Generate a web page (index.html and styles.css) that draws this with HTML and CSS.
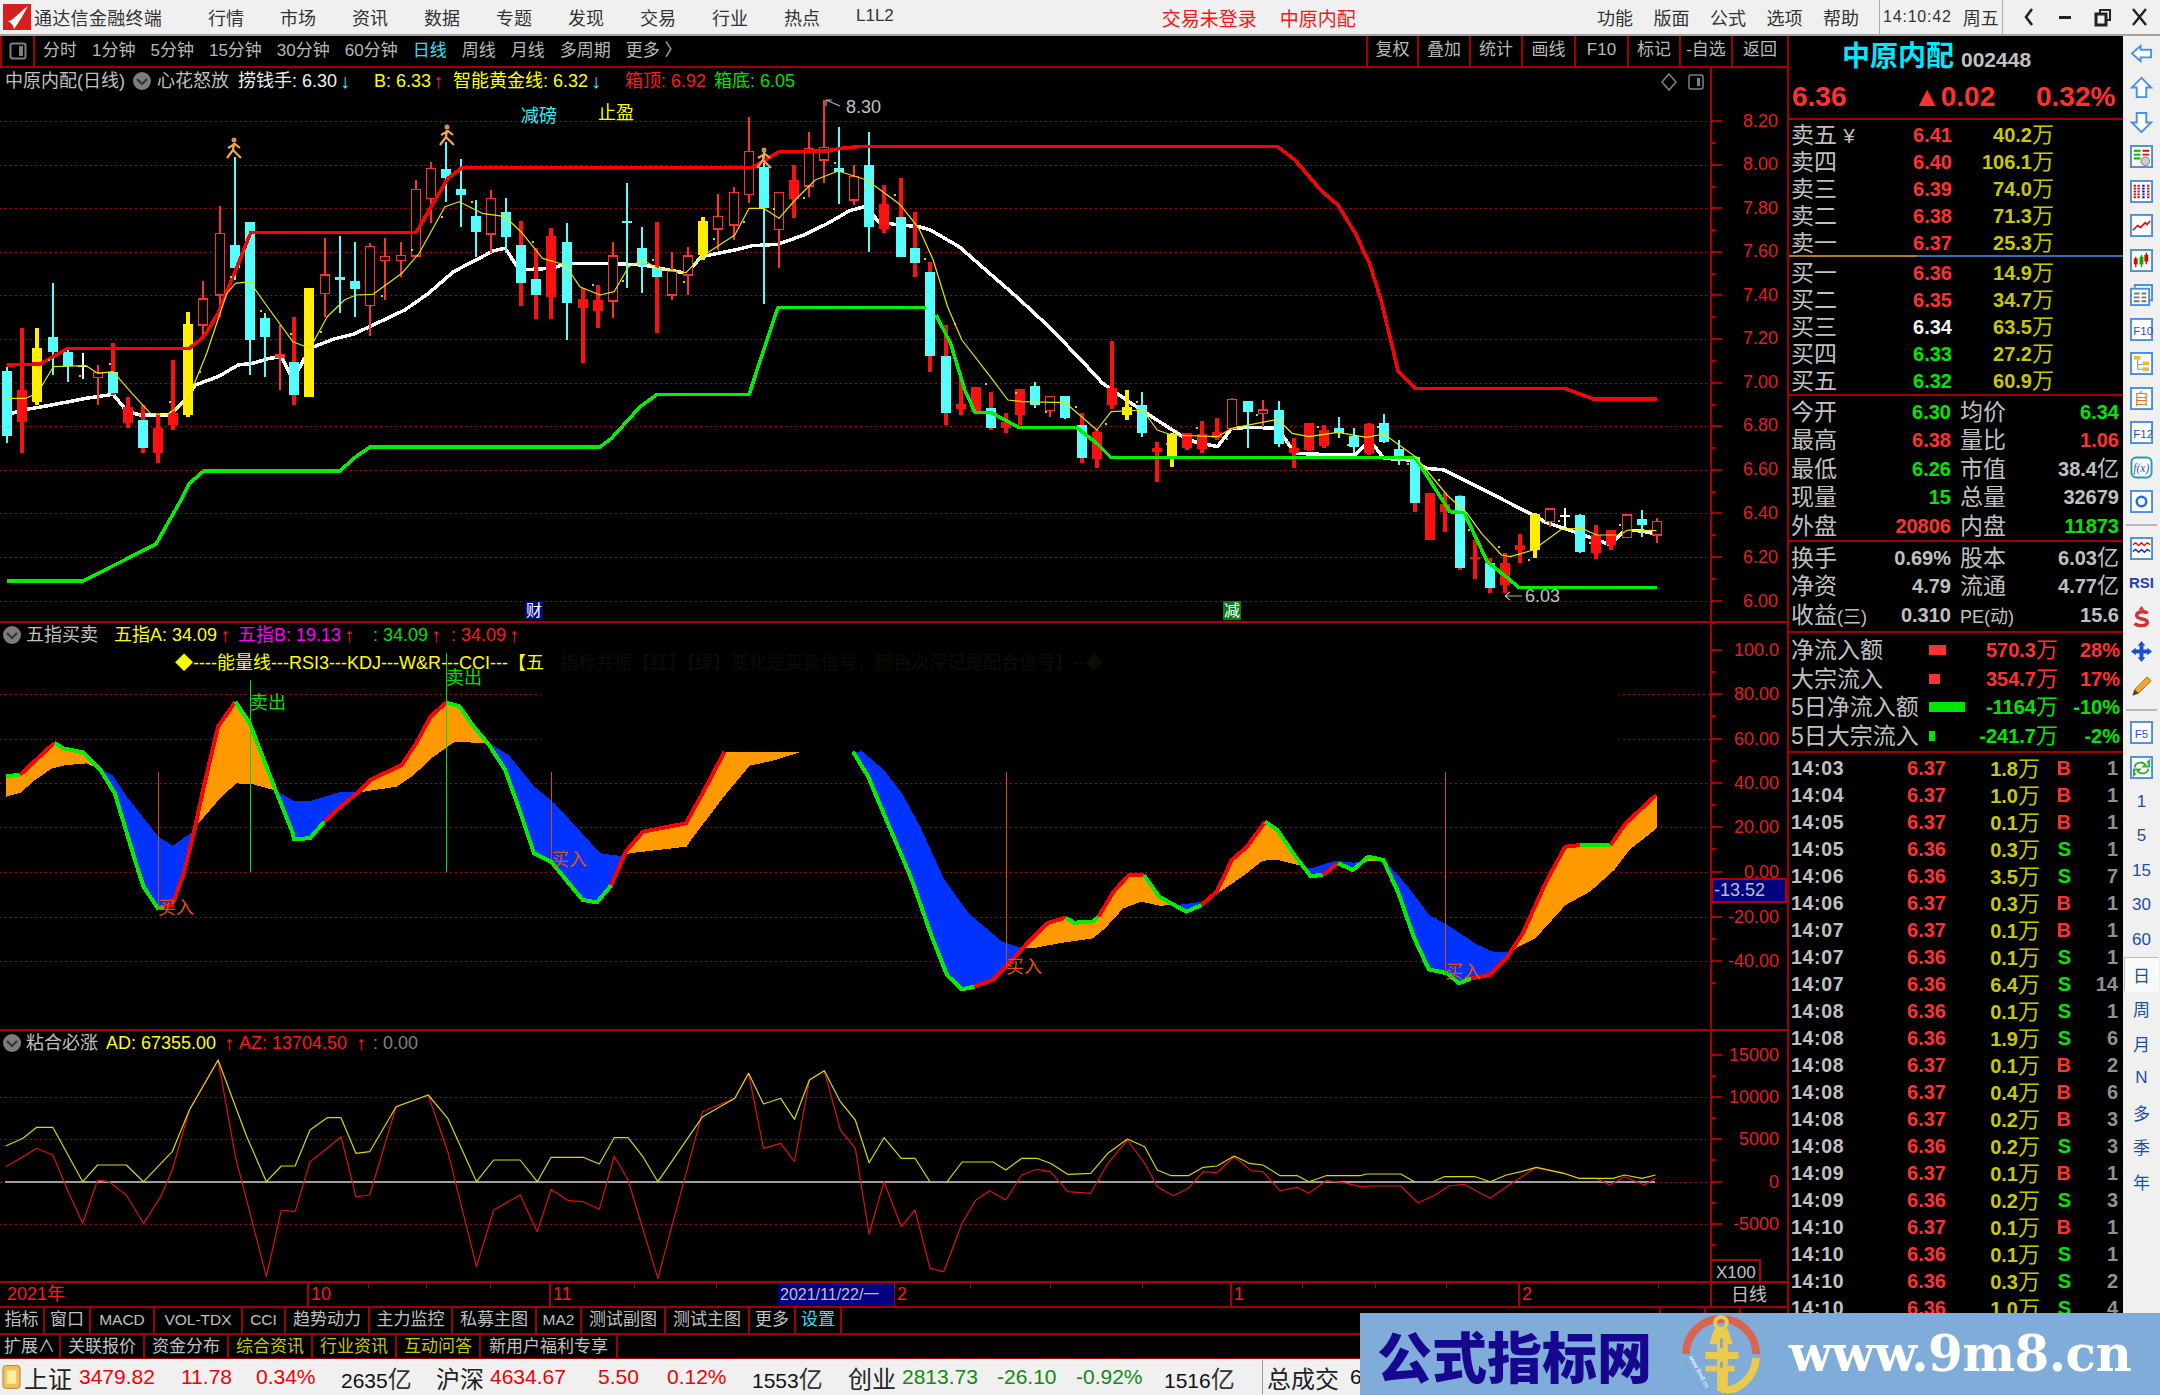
FILE: index.html
```html
<!DOCTYPE html>
<html lang="zh">
<head>
<meta charset="utf-8">
<title>通达信金融终端</title>
<link rel="stylesheet" href="styles.css">
</head>
<body>
<div class="app">
  <header class="menubar">
    <svg class="logo" viewBox="0 0 28 26"><rect width="28" height="26" fill="#d81e1e"/><path d="M4 17C9 18 13 11 25 2C20 11 17 17 11 25C10 21 8 18 4 17Z" fill="#fff"/></svg>
    <span class="app-title">通达信金融终端</span>
    <nav class="menu-main"><span>行情</span><span>市场</span><span>资讯</span><span>数据</span><span>专题</span><span>发现</span><span>交易</span><span>行业</span><span>热点</span><span class="thin">L1L2</span></nav>
    <div class="menu-alert"><span>交易未登录</span><span>中原内配</span></div>
    <nav class="menu-func"><span>功能</span><span>版面</span><span>公式</span><span>选项</span><span>帮助</span></nav>
    <div class="clock"><span>14:10:42</span><span>周五</span></div>
    <div class="winctl">
      <svg viewBox="0 0 20 20"><path d="M13 2L7 10L13 18" fill="none" stroke="#222" stroke-width="2.6"/></svg>
      <svg viewBox="0 0 20 20"><rect x="3" y="9" width="12" height="3" fill="#222"/></svg>
      <svg viewBox="0 0 20 20"><path d="M7 3H17V13H13V7H7Z" fill="none" stroke="#222" stroke-width="2"/><rect x="3" y="7" width="10" height="11" fill="none" stroke="#222" stroke-width="3"/></svg>
      <svg viewBox="0 0 20 20"><path d="M3 2L16 18M16 2L3 18" stroke="#222" stroke-width="2.4"/></svg>
    </div>
  </header>
  <div class="main">
    <div class="workspace">
      <div class="periodbar">
        <div class="layout-btn"><svg viewBox="0 0 18 18"><rect x="1.5" y="1.5" width="15" height="15" rx="2" fill="none" stroke="#808080" stroke-width="2"/><rect x="10" y="4" width="4" height="10" fill="#808080"/></svg></div>
        <div class="periods"><span>分时</span><span>1分钟</span><span>5分钟</span><span>15分钟</span><span>30分钟</span><span>60分钟</span><span class="on">日线</span><span>周线</span><span>月线</span><span>多周期</span><span>更多 〉</span></div>
        <div class="tools"><span>复权</span><span>叠加</span><span>统计</span><span>画线</span><span>F10</span><span>标记</span><span>-自选</span><span>返回</span></div>
      </div>
      <svg id="chart" class="chart" viewBox="0 68 1787 1238" width="1787" height="1238">
        <g id="grid"></g>
        <g id="white"></g>
        <g id="candles"></g>
        <g id="lines"></g>
        <g id="figures"></g>

        <g class="t">
          <text x="5" y="81">中原内配(日线)</text>
          <circle cx="142" cy="81" r="9" fill="#7c7c7c"/><path d="M137 79l5 5l5-5" class="chev"/>
          <text x="157" y="81">心花怒放</text>
          <text x="238" y="81" class="w">捞钱手</text><text x="292" y="81" class="w">: 6.30</text><text x="340" y="81" class="c ar">↓</text>
          <text x="374" y="81" class="y">B: 6.33</text><text x="433" y="81" class="r ar">↑</text>
          <text x="453" y="81" class="y">智能黄金线: 6.32</text><text x="591" y="81" class="c ar">↓</text>
          <text x="625" y="81" class="r">箱顶: 6.92</text>
          <text x="714" y="81" class="g">箱底: 6.05</text>
          <text x="521" y="116" class="c">减磅</text>
          <text x="598" y="113" class="y">止盈</text>
          <text x="846" y="107">8.30</text>
          <text x="1525" y="596">6.03</text>
          <rect x="525" y="601" width="18" height="19" fill="#000a80"/>
          <text x="526" y="610" class="small">财</text>
          <rect x="1223" y="601" width="18" height="19" fill="#0a7a20"/>
          <text x="1224" y="610" class="small">减</text>
          <path d="M1669 74l7 8l-7 8l-7-8z" class="outline"/>
          <rect x="1689" y="75" width="14" height="14" rx="2" class="outline"/><rect x="1697" y="78" width="3" height="8" fill="#808080"/>
        </g>
        <g class="axis">
          <text x="1778" y="121">8.20</text><text x="1778" y="164">8.00</text><text x="1778" y="208">7.80</text><text x="1778" y="251">7.60</text>
          <text x="1778" y="295">7.40</text><text x="1778" y="338">7.20</text><text x="1778" y="382">7.00</text><text x="1778" y="425">6.80</text>
          <text x="1778" y="469">6.60</text><text x="1778" y="513">6.40</text><text x="1778" y="557">6.20</text><text x="1778" y="601">6.00</text>
          <text x="1779" y="650">100.0</text><text x="1779" y="694">80.00</text><text x="1779" y="739">60.00</text><text x="1779" y="783">40.00</text>
          <text x="1779" y="827">20.00</text><text x="1779" y="872">0.00</text><text x="1779" y="917">-20.00</text><text x="1779" y="961">-40.00</text>
          <text x="1779" y="1055">15000</text><text x="1779" y="1097">10000</text><text x="1779" y="1139">5000</text><text x="1779" y="1182">0</text><text x="1779" y="1224">-5000</text>
        </g>

        <g class="t">
          <circle cx="12" cy="635" r="9" fill="#7c7c7c"/><path d="M7 633l5 5l5-5" class="chev"/>
          <text x="26" y="635">五指买卖</text>
          <text x="114" y="635" class="y">五指A: 34.09</text><text x="220" y="635" class="r ar">↑</text>
          <text x="238" y="635" class="m">五指B: 19.13</text><text x="344" y="635" class="r ar">↑</text>
          <text x="373" y="635" class="g">: 34.09</text><text x="431" y="635" class="r ar">↑</text>
          <text x="451" y="635" class="r">: 34.09</text><text x="509" y="635" class="r ar">↑</text>
          <text x="175" y="663" class="y">◆----能量线---RSI3---KDJ---W&amp;R---CCI---【五</text>
          <text x="560" y="663" class="faint">指标共振【红】【绿】变化是买卖信号，颜色次深记是配合信号】--◆</text>
          <text x="250" y="703" class="g">卖出</text>
          <text x="446" y="678" class="g">卖出</text>
          <text x="158" y="908" class="o">买入</text>
          <text x="551" y="860" class="o">买入</text>
          <text x="1006" y="967" class="o">买入</text>
          <text x="1445" y="972" class="o">买入</text>
          <rect x="1712" y="879" width="74" height="23" fill="#000080" stroke="#b00000" stroke-width="2"/>
          <text x="1714" y="890">-13.52</text>

          <circle cx="12" cy="1043" r="9" fill="#7c7c7c"/><path d="M7 1041l5 5l5-5" class="chev"/>
          <text x="26" y="1043">粘合必涨</text>
          <text x="106" y="1043" class="y">AD: 67355.00</text><text x="224" y="1043" class="r ar">↑</text>
          <text x="239" y="1043" class="r">AZ: 13704.50</text><text x="356" y="1043" class="r ar">↑</text>
          <text x="373" y="1043" class="dim">: 0.00</text>

          <rect x="1711" y="1260" width="49" height="22" fill="none" stroke="#b00000" stroke-width="2"/>
          <text x="1716" y="1272" class="s17">X100</text>

          <rect x="778" y="1283" width="116" height="23" fill="#000080"/>
          <text x="7" y="1294" class="r">2021年</text>
          <text x="311" y="1294" class="r">10</text>
          <text x="553" y="1294" class="r">11</text>
          <text x="780" y="1294" class="s16">2021/11/22/一</text>
          <text x="897" y="1294" class="r">2</text>
          <text x="1234" y="1294" class="r">1</text>
          <text x="1522" y="1294" class="r">2</text>
          <text x="1731" y="1295">日线</text>
        </g>
      </svg>
      <div class="tabs tabs1"><span>指标</span><span>窗口</span><span>MACD</span><span>VOL-TDX</span><span>CCI</span><span>趋势动力</span><span>主力监控</span><span>私募主图</span><span>MA2</span><span>测试副图</span><span>测试主图</span><span>更多</span><span class="cy">设置</span><b></b><span class="lb"></span><span></span></div>
      <div class="tabs tabs2"><span>扩展∧</span><span>关联报价</span><span>资金分布</span><span class="ye">综合资讯</span><span class="ye">行业资讯</span><span class="ye">互动问答</span><span>新用户福利专享</span></div>
    </div>

    <aside class="quote">
      <section class="q-head">
        <div class="q-name"><strong>中原内配</strong><span>002448</span></div>
        <div class="q-price"><span>6.36</span><span>▲0.02</span><span>0.32%</span></div>
      </section>
      <section class="book">
        <div class="brow"><span>卖五 <em>¥</em></span><b class="up">6.41</b><b class="vol">40.2<i>万</i></b></div>
        <div class="brow"><span>卖四</span><b class="up">6.40</b><b class="vol">106.1<i>万</i></b></div>
        <div class="brow"><span>卖三</span><b class="up">6.39</b><b class="vol">74.0<i>万</i></b></div>
        <div class="brow"><span>卖二</span><b class="up">6.38</b><b class="vol">71.3<i>万</i></b></div>
        <div class="brow"><span>卖一</span><b class="up">6.37</b><b class="vol">25.3<i>万</i></b></div>
      </section>
      <div class="book-split"></div>
      <section class="book bids">
        <div class="brow"><span>买一</span><b class="up">6.36</b><b class="vol">14.9<i>万</i></b></div>
        <div class="brow"><span>买二</span><b class="up">6.35</b><b class="vol">34.7<i>万</i></b></div>
        <div class="brow"><span>买三</span><b class="fl">6.34</b><b class="vol">63.5<i>万</i></b></div>
        <div class="brow"><span>买四</span><b class="dn">6.33</b><b class="vol">27.2<i>万</i></b></div>
        <div class="brow"><span>买五</span><b class="dn">6.32</b><b class="vol">60.9<i>万</i></b></div>
      </section>
      <section class="stats st1">
        <div class="srow"><span>今开</span><b class="dn">6.30</b><u></u><span>均价</span><b class="dn">6.34</b></div>
        <div class="srow"><span>最高</span><b class="up">6.38</b><u></u><span>量比</span><b class="up">1.06</b></div>
        <div class="srow"><span>最低</span><b class="dn">6.26</b><u></u><span>市值</span><b class="gy">38.4<i>亿</i></b></div>
        <div class="srow"><span>现量</span><b class="dn">15</b><u></u><span>总量</span><b class="gy">32679</b></div>
        <div class="srow"><span>外盘</span><b class="up">20806</b><u></u><span>内盘</span><b class="dn">11873</b></div>
      </section>
      <section class="stats st2">
        <div class="srow"><span>换手</span><b class="gy">0.69%</b><u></u><span>股本</span><b class="gy">6.03<i>亿</i></b></div>
        <div class="srow"><span>净资</span><b class="gy">4.79</b><u></u><span>流通</span><b class="gy">4.77<i>亿</i></b></div>
        <div class="srow"><span>收益<small>(三)</small></span><b class="gy">0.310</b><u></u><span><small>PE(动)</small></span><b class="gy">15.6</b></div>
      </section>
      <section class="flows">
        <div class="frow"><span>净流入额</span><div class="bar b1"></div><b class="up">570.3<i>万</i></b><b class="up">28%</b></div>
        <div class="frow"><span>大宗流入</span><div class="bar b2"></div><b class="up">354.7<i>万</i></b><b class="up">17%</b></div>
        <div class="frow"><span>5日净流入额</span><div class="bar b3"></div><b class="dn">-1164<i>万</i></b><b class="dn">-10%</b></div>
        <div class="frow"><span>5日大宗流入</span><div class="bar b4"></div><b class="dn">-241.7<i>万</i></b><b class="dn">-2%</b></div>
      </section>
      <section class="ticks">
        <div class="tk"><span>14:03</span><b class="up">6.37</b><b class="vol">1.8<i>万</i></b><b class="up">B</b><b class="ct">1</b></div>
        <div class="tk"><span>14:04</span><b class="up">6.37</b><b class="vol">1.0<i>万</i></b><b class="up">B</b><b class="ct">1</b></div>
        <div class="tk"><span>14:05</span><b class="up">6.37</b><b class="vol">0.1<i>万</i></b><b class="up">B</b><b class="ct">1</b></div>
        <div class="tk"><span>14:05</span><b class="up">6.36</b><b class="vol">0.3<i>万</i></b><b class="dn">S</b><b class="ct">1</b></div>
        <div class="tk"><span>14:06</span><b class="up">6.36</b><b class="vol">3.5<i>万</i></b><b class="dn">S</b><b class="ct">7</b></div>
        <div class="tk"><span>14:06</span><b class="up">6.37</b><b class="vol">0.3<i>万</i></b><b class="up">B</b><b class="ct">1</b></div>
        <div class="tk"><span>14:07</span><b class="up">6.37</b><b class="vol">0.1<i>万</i></b><b class="up">B</b><b class="ct">1</b></div>
        <div class="tk"><span>14:07</span><b class="up">6.36</b><b class="vol">0.1<i>万</i></b><b class="dn">S</b><b class="ct">1</b></div>
        <div class="tk"><span>14:07</span><b class="up">6.36</b><b class="vol">6.4<i>万</i></b><b class="dn">S</b><b class="ct">14</b></div>
        <div class="tk"><span>14:08</span><b class="up">6.36</b><b class="vol">0.1<i>万</i></b><b class="dn">S</b><b class="ct">1</b></div>
        <div class="tk"><span>14:08</span><b class="up">6.36</b><b class="vol">1.9<i>万</i></b><b class="dn">S</b><b class="ct">6</b></div>
        <div class="tk"><span>14:08</span><b class="up">6.37</b><b class="vol">0.1<i>万</i></b><b class="up">B</b><b class="ct">2</b></div>
        <div class="tk"><span>14:08</span><b class="up">6.37</b><b class="vol">0.4<i>万</i></b><b class="up">B</b><b class="ct">6</b></div>
        <div class="tk"><span>14:08</span><b class="up">6.37</b><b class="vol">0.2<i>万</i></b><b class="up">B</b><b class="ct">3</b></div>
        <div class="tk"><span>14:08</span><b class="up">6.36</b><b class="vol">0.2<i>万</i></b><b class="dn">S</b><b class="ct">3</b></div>
        <div class="tk"><span>14:09</span><b class="up">6.37</b><b class="vol">0.1<i>万</i></b><b class="up">B</b><b class="ct">1</b></div>
        <div class="tk"><span>14:09</span><b class="up">6.36</b><b class="vol">0.2<i>万</i></b><b class="dn">S</b><b class="ct">3</b></div>
        <div class="tk"><span>14:10</span><b class="up">6.37</b><b class="vol">0.1<i>万</i></b><b class="up">B</b><b class="ct">1</b></div>
        <div class="tk"><span>14:10</span><b class="up">6.36</b><b class="vol">0.1<i>万</i></b><b class="dn">S</b><b class="ct">1</b></div>
        <div class="tk"><span>14:10</span><b class="up">6.36</b><b class="vol">0.3<i>万</i></b><b class="dn">S</b><b class="ct">2</b></div>
        <div class="tk"><span>14:10</span><b class="up">6.36</b><b class="vol">1.0<i>万</i></b><b class="dn">S</b><b class="ct">4</b></div>
      </section>
    </aside>

    <nav class="side">
      <div><svg viewBox="0 0 24 24"><path class="arw" d="M2 12L11 4V8H22V16H11V20Z"/></svg></div>
      <div><svg viewBox="0 0 24 24"><path class="arw" d="M12 2L22 12H17V22H7V12H2Z"/></svg></div>
      <div><svg viewBox="0 0 24 24"><path class="arw" d="M12 22L22 12H17V2H7V12H2Z"/></svg></div>
      <div><svg viewBox="0 0 24 24"><rect class="box" x="1" y="1" width="22" height="22"/><path d="M4 6h7M4 10h7M4 14h7" stroke="#0a0" stroke-width="2"/><path d="M13 6h7M13 10h7" stroke="#e00" stroke-width="2"/><circle cx="16" cy="17" r="4.5" fill="#ccc" stroke="#777"/></svg></div>
      <div><svg viewBox="0 0 24 24"><rect class="box" x="1" y="1" width="22" height="22"/><path d="M5 5v14M9 5v14M19 5v14" stroke="#e00" stroke-width="2.4" stroke-dasharray="2 1"/><path d="M14 5v14" stroke="#00c" stroke-width="2.4" stroke-dasharray="2 1"/></svg></div>
      <div><svg viewBox="0 0 24 24"><rect class="box" x="1" y="1" width="22" height="22"/><path d="M3 17L8 12L11 14L16 9L18 11L21 7" fill="none" stroke="#e00" stroke-width="1.6"/></svg></div>
      <div><svg viewBox="0 0 24 24"><rect class="box" x="1" y="1" width="22" height="22"/><path d="M6 8v11M17 4v12" stroke="#e00" stroke-width="1.4"/><path d="M12 6v13" stroke="#0a0" stroke-width="1.4"/><rect x="4" y="10" width="4" height="6" fill="#e00"/><rect x="10" y="8" width="4" height="8" fill="#0a0"/><rect x="15" y="6" width="4" height="7" fill="#e00"/></svg></div>
      <div><svg viewBox="0 0 24 24"><path class="box" d="M5 5V2H23V18H20"/><rect class="box" x="1" y="6" width="19" height="17"/><path d="M4 11h6M12 11h5M4 15h6M12 15h5M4 19h6M12 19h5" stroke="#777" stroke-width="2"/></svg></div>
      <div><svg viewBox="0 0 24 24"><rect class="box" x="1" y="1" width="22" height="22"/><text x="3.5" y="18" class="ic-t">F10</text></svg></div>
      <div><svg viewBox="0 0 24 24"><rect class="box" x="1" y="1" width="22" height="22"/><path d="M8 8v10h5M8 13h5" fill="none" stroke="#6aa" stroke-width="1.2"/><rect x="4" y="4" width="7" height="4" fill="#f0b840"/><rect x="13" y="10" width="7" height="4" fill="#f0b840"/><rect x="13" y="16" width="7" height="4" fill="#f0b840"/></svg></div>
      <div><svg viewBox="0 0 24 24"><rect class="box" x="1" y="1" width="22" height="22"/><text x="4" y="18" class="ic-o">自</text></svg></div>
      <div><svg viewBox="0 0 24 24"><rect class="box" x="1" y="1" width="22" height="22"/><text x="3.5" y="18" class="ic-t">F12</text></svg></div>
      <div><svg viewBox="0 0 24 24"><rect x="1.5" y="1.5" width="21" height="21" rx="5" fill="#fff" stroke="#2a9aa0" stroke-width="2"/><text x="3.5" y="17" class="ic-f">f(x)</text></svg></div>
      <div><svg viewBox="0 0 24 24"><rect class="box" x="1" y="1" width="22" height="22"/><circle cx="12" cy="12" r="5" fill="none" stroke="#2a6ae0" stroke-width="2.6"/></svg></div>
      <hr>
      <div><svg viewBox="0 0 24 24"><rect class="box" x="1" y="1" width="22" height="22"/><path d="M3 8L6 6L9 9L12 6L15 9L18 6L21 8" fill="none" stroke="#e00" stroke-width="1.4"/><path d="M3 15L6 13L9 16L12 13L15 16L18 13L21 15" fill="none" stroke="#22c" stroke-width="1.4"/></svg></div>
      <div><span class="rsi">RSI</span></div>
      <div><svg viewBox="0 0 24 24"><path d="M18 8C17 5 7 5 7 10C7 15 18 12 18 17C18 22 7 21 5 18" fill="none" stroke="#d03030" stroke-width="3.6"/><path d="M12 0L15 4H9Z" fill="#d03030"/></svg></div>
      <div><svg viewBox="0 0 24 24"><path d="M12 1L16 6H14V10H18V8L23 12L18 16V14H14V18H16L12 23L8 18H10V14H6V16L1 12L6 8V10H10V6H8Z" fill="#1a50d0"/></svg></div>
      <div><svg viewBox="0 0 24 24"><path d="M3 21L5 15L18 2L22 6L9 19Z" fill="#f0a830" stroke="#a07020"/><path d="M3 21L5 15L9 19Z" fill="#443"/></svg></div>
      <hr>
      <div><svg viewBox="0 0 24 24"><rect class="box" x="1" y="1" width="22" height="22"/><text x="5" y="18" class="ic-t">F5</text></svg></div>
      <div><svg viewBox="0 0 24 24"><rect class="box" x="1" y="1" width="22" height="22"/><path d="M5 12C5 7 12 5 16 9L14 11H20V5L18 7M19 13C19 18 12 20 8 16L10 14H4V20L6 18" fill="none" stroke="#30b040" stroke-width="2"/></svg></div>
      <div class="lbl">1</div><div class="lbl">5</div><div class="lbl">15</div><div class="lbl">30</div><div class="lbl">60</div>
      <div class="lbl act">日</div><div class="lbl">周</div><div class="lbl">月</div><div class="lbl">N</div><div class="lbl">多</div><div class="lbl">季</div><div class="lbl">年</div>
    </nav>
  </div>
  <footer class="status">
    <svg class="st-ic" viewBox="0 0 20 26"><rect x="1" y="1" width="18" height="24" rx="3" fill="#f0c060" stroke="#b08030"/><rect x="5" y="6" width="10" height="14" fill="#fff0a0"/></svg>
    <span class="big">上证</span><span class="ur">3479.82</span><span class="ur">11.78</span><span class="ur">0.34%</span><span class="k">2635<i>亿</i></span>
    <span class="big">沪深</span><span class="ur">4634.67</span><span class="ur">5.50</span><span class="ur">0.12%</span><span class="k">1553<i>亿</i></span>
    <span class="big">创业</span><span class="ug">2813.73</span><span class="ug">-26.10</span><span class="ug">-0.92%</span><span class="k">1516<i>亿</i></span>
    <span class="st-sep"></span><span class="big">总成交</span><span class="k">6</span>
  </footer>
</div>
<div class="watermark">
  <span class="wm-cn">公式指标网</span>
  <svg class="wm-logo" viewBox="0 0 80 80">
    <path d="M4 40A36 36 0 0 1 76 40" fill="none" stroke="#d7654f" stroke-width="8"/>
    <path d="M76 44A36 36 0 0 1 40 78" fill="none" stroke="#eacb4d" stroke-width="8"/>
    <path d="M40 78A36 36 0 0 1 4 46" fill="none" stroke="#7fa8d6" stroke-width="1"/>
    <circle cx="40" cy="8" r="6" fill="none" stroke="#eacb4d" stroke-width="4"/>
    <path d="M33 14H47L52 30H47V38H58V45H47V52H54V58H47V78H36V58H24V52H36V45H24V38H36V30H28Z" fill="#eacb4d"/>
    <path d="M39 24h3v10h-3zM39 48h3v6h-3z" fill="#7fa8d6"/>
    <text x="0" y="0" class="wm-tiny" transform="translate(7 43) rotate(62)">www.9m8.cn</text>
  </svg>
  <span class="wm-en">www.9m8.cn</span>
</div>
<script src="chart.js"></script>
</body>
</html>
```
FILE: styles.css
```css
*{box-sizing:border-box}
html,body{margin:0;padding:0;background:#000}
body{width:2160px;height:1395px;overflow:hidden;position:relative;font-family:"Liberation Sans","Noto Sans CJK SC",sans-serif}
.app{display:flex;flex-direction:column;height:1395px}
i,em{font-style:normal}

/* menu bar */
.menubar{height:36px;flex:none;display:flex;align-items:center;background:#f0f0f0;border-bottom:2px solid #a4a4a4;color:#333;font-size:18px;padding-left:3px;white-space:nowrap}
.logo{width:28px;height:26px;flex:none}
.app-title{margin-left:3px;width:128px;letter-spacing:.3px}
.menu-main{display:flex;gap:36px;margin-left:46px}
.menu-main .thin{font-size:17px;line-height:24px}
.menu-alert{display:flex;gap:23px;margin-left:268px;color:#f01818;font-size:19px}
.menu-func{display:flex;gap:20.5px;margin-left:auto}
.clock{width:124px;height:34px;margin-left:20px;border-left:1px solid #aaa;border-right:1px solid #aaa;display:flex;align-items:center;gap:11px;padding-left:3px;font-size:16px;letter-spacing:.8px}
.clock span:last-child{font-size:18px;letter-spacing:0}
.winctl{width:157px;flex:none;display:flex;padding-left:16px;gap:17px}
.winctl svg{width:20px;height:20px}

.main{flex:1;display:flex;min-height:0}
.workspace{width:1787px;flex:none;display:flex;flex-direction:column;background:#000}

/* period bar */
.periodbar{height:32px;flex:none;display:flex;border-bottom:2px solid #a00000;color:#b8b8b8;font-size:17px;align-items:stretch}
.layout-btn{width:35px;border-left:2px solid #a00000;border-right:2px solid #a00000;display:flex;align-items:center;justify-content:center}
.layout-btn svg{width:18px;height:18px}
.periods{display:flex;gap:15px;margin-left:8px;align-items:center;white-space:nowrap}
.periods span{line-height:28px}
.periods .on{color:#33e0f0}
.tools{display:grid;grid-template-columns:51px 52px 52px 53px 53px 52px 52px 56px;margin-left:auto;width:421px}
.tools span{border-left:2px solid #a00000;text-align:center;line-height:28px}

.chart{display:block;flex:none;background:#000}
.chart text{font-size:18px;dominant-baseline:central;fill:#c0c0c0;font-family:"Liberation Sans","Noto Sans CJK SC",sans-serif}
.chart .axis text{text-anchor:end;fill:#e02020}
.chart .w{fill:#f0f0f0}
.chart .y{fill:#ffff00}
.chart .r{fill:#ff1a1a}
.chart .g{fill:#00e000}
.chart .c{fill:#33f0ff}
.chart .m{fill:#ff00ff}
.chart .o{fill:#e05010}
.chart .dim{fill:#808080}
.chart .faint{fill:#0e0e00}
.chart .small{font-size:16px;fill:#fff}
.chart .s17{font-size:17px}
.chart .s16{font-size:16px}
.chart .ar{font-size:20px}
.chev{fill:none;stroke:#333;stroke-width:2}
.outline{fill:none;stroke:#808080;stroke-width:1.5}
.grid-dot{stroke:#b00000;stroke-width:1;stroke-dasharray:2 3;shape-rendering:crispEdges}
.rule{stroke:#a80000;stroke-width:2;shape-rendering:crispEdges}
.rule-thin{stroke:#a80000;stroke-width:1;shape-rendering:crispEdges}
.ln{fill:none;stroke-linejoin:round}
.crisp{shape-rendering:crispEdges}

/* tabs */
.tabs{display:grid;height:27px;flex:none;border-top:2px solid #a00000;color:#c0c0c0;font-size:17px}
.tabs span{border-right:2px solid #a00000;text-align:center;line-height:24px;white-space:nowrap}
.tabs1{grid-template-columns:45px 46px 64px 88px 43px 84px 83px 84px 45px 84px 84px 46px 46px 817px 47px 35px}
.tabs1 span:nth-child(n+3):nth-child(-n+5),.tabs1 span:nth-child(9){font-size:15.5px}
.tabs1 .lb{border-left:2px solid #a00000}
.tabs2{grid-template-columns:61px 84px 84px 84px 84px 84px 137px;border-bottom:2px solid #a00000;height:27px}
.cy{color:#33e0f0}
.ye{color:#c8c800}

/* quote panel */
.quote{width:336px;flex:none;border-left:2px solid #a00000;background:#000;color:#c0c0c0;overflow:hidden;font-size:23px}
.quote b{font-size:20px;font-weight:700}
.quote i{font-size:22px;font-weight:400}
.q-head{height:84px;border-bottom:2px solid #a00000}
.q-name{height:42px;display:flex;align-items:center;padding-left:53px}
.q-name strong{font-size:28px;color:#00e8ff;font-weight:700;line-height:1}
.q-name span{margin-left:7px;margin-top:5px;font-size:21px;font-weight:700;color:#c0c0c0}
.q-price{display:grid;grid-template-columns:121px 123px auto;padding:2px 0 0 3px;color:#ff3232;font-size:28px;font-weight:700;line-height:34px}
.book{padding-left:2px}
.brow{display:grid;grid-template-columns:121px 40px 102px;height:27px;line-height:30px;white-space:nowrap}
.brow b{text-align:right}
.brow em{font-size:20px}
.book-split{height:2px;background:linear-gradient(90deg,#b07828 0 128px,#3070b0 128px)}
.bids{padding-top:1px;height:139px;border-bottom:2px solid #a00000}
.up{color:#ff3232}
.dn{color:#00e600}
.fl{color:#f4f4f4}
.gy{color:#c0c0c0}
.vol{color:#c8c800}
.stats{padding-left:2px;border-bottom:2px solid #a00000}
.st1{height:146px}
.st2{height:91px}
.srow{display:grid;grid-template-columns:75px 85px 9px 75px 84px;height:28.4px;line-height:32px;white-space:nowrap}
.srow b{text-align:right}
.srow u{display:block}
.srow small{font-size:18px}
.flows{height:120px;padding:3px 0 0 2px;border-bottom:2px solid #a00000}
.frow{display:grid;grid-template-columns:138px 40px 89px 62px;height:28.5px;line-height:28.5px;align-items:center;white-space:nowrap}
.frow b{text-align:right}
.bar{height:10px}
.b1{width:17px;background:#ff3232}
.b2{width:11px;background:#ff3232}
.b3{width:36px;background:#00e600}
.b4{width:6px;background:#00e600}
.ticks{padding-left:2px}
.tk{display:grid;grid-template-columns:60px 95px 94px 31px 47px;height:27px;line-height:31px;white-space:nowrap}
.tk span{font-size:19.5px;font-weight:700;letter-spacing:.7px}
.tk b{text-align:right}
.ct{color:#909090}

/* side toolbar */
.side{flex:1;background:#f0f0f0;color:#1a4fa0;min-width:0}
.side div{height:34.5px;display:flex;align-items:center;justify-content:center}
.side svg{width:23px;height:23px}
.side hr{margin:5px 3px;height:2px;border:0;background:#b8b8b8}
.arw{fill:#fff;stroke:#4a90e2;stroke-width:2}
.box{fill:#fff;stroke:#4a90e2;stroke-width:2}
.ic-t{font-size:12px;fill:#1a50d0;font-family:"Liberation Sans",sans-serif}
.ic-o{font-size:16px;fill:#f07020;font-family:"Noto Sans CJK SC",sans-serif}
.ic-f{font-size:12px;font-style:italic;fill:#1a50d0;font-family:"Liberation Serif",serif}
.rsi{font-size:15px;font-weight:700;color:#2040b0}
.lbl{font-size:17px}
.act{margin:0 1px;background:#fafafa;border:1px solid;border-color:#bbb #f8f8f8 #f8f8f8 #bbb}

/* status bar */
.status{height:36px;flex:none;background:#f0f0f0;display:grid;grid-template-columns:22px 55px 102px 75px 85px 95px 54px 108px 69px 85px 96px 54px 95px 79px 88px 98px 5px 83px 10px;padding-left:2px;align-items:center;font-size:21px;white-space:nowrap}
.st-ic{width:19px;height:26px}
.big{font-size:24px;color:#222;font-weight:400}
.ur{color:#f00000}
.ug{color:#108a10}
.k{color:#111}
.k i{font-size:24px;color:#333}
.st-sep{width:1px;height:34px;background:#999}

/* watermark overlay */
.watermark{position:absolute;right:0;bottom:0;width:800px;height:82px;background:#80acd9;display:flex;align-items:center;padding-left:17px}
.wm-cn{font-family:"Noto Sans CJK SC",sans-serif;font-weight:900;font-size:55px;line-height:1;color:#17078f;width:275px;white-space:nowrap}
.wm-logo{width:78px;height:78px;margin-left:30px;flex:none}
.wm-tiny{font-size:6.5px;fill:#fff}
.wm-en{margin-left:29px;font-family:"DejaVu Serif",serif;font-weight:700;font-size:50px;color:#fff;line-height:1;white-space:nowrap;letter-spacing:-.6px}
```
FILE: chart.js
```js
(function () {
  var NS = 'http://www.w3.org/2000/svg';
  function el(parent, tag, attrs) {
    var n = document.createElementNS(NS, tag);
    for (var k in attrs) n.setAttribute(k, attrs[k]);
    parent.appendChild(n);
    return n;
  }
  var g = function (id) { return document.getElementById(id); };
  var Z8 = function (x, y) { return [x / 1.742, 100 + y / 3]; };
  var Z9 = function (x, y) { return [850 + x / 1.742, 100 + y / 3]; };
  var Z10 = function (x, y) { return [x / 1.742, 620 + y / 3]; };
  var Z11 = function (x, y) { return [850 + x / 1.65, 620 + y / 3]; };
  var Z12 = function (x, y) { return [x / 0.871, 1030 + y / 3]; };
  function pts(map, a) {
    var r = [];
    for (var i = 0; i < a.length; i += 2) r.push(map(a[i], a[i + 1]));
    return r;
  }
  function poly(parent, p, color, w, cls) {
    el(parent, 'polyline', {
      points: p.map(function (q) { return q[0].toFixed(1) + ',' + q[1].toFixed(1); }).join(' '),
      stroke: color, 'stroke-width': w, 'class': 'ln ' + (cls || '')
    });
  }
  function line(parent, x1, y1, x2, y2, cls) {
    el(parent, 'line', { x1: x1, y1: y1, x2: x2, y2: y2, 'class': cls });
  }
  function at(series, x) {
    for (var k = 1; k < series.length; k++) {
      if (x <= series[k][0]) {
        var a = series[k - 1], b = series[k];
        return a[1] + (b[1] - a[1]) * (x - a[0]) / ((b[0] - a[0]) || 1);
      }
    }
    return series[series.length - 1][1];
  }

  /* ---------- grid and frame ---------- */
  var G = g('grid');
  var y, i;
  for (i = 0; i < 12; i++) {
    y = Math.round(121 + i * 43.6);
    line(G, 0, y, 1711, y, 'grid-dot');
    line(G, 1711, y, 1722, y, 'rule');
    line(G, 1711, y + 22, 1716, y + 22, 'rule');
  }
  [694, 739].forEach(function (v) {
    line(G, 0, v, 538, v, 'grid-dot');
    line(G, 1623, v, 1711, v, 'grid-dot');
  });
  [783, 827, 872, 917, 961].forEach(function (v) { line(G, 0, v, 1711, v, 'grid-dot'); });
  [650, 694, 739, 783, 827, 872, 917, 961].forEach(function (v) {
    line(G, 1711, v, 1722, v, 'rule');
    line(G, 1711, v + 22, 1716, v + 22, 'rule');
  });
  [1097, 1139, 1182, 1224].forEach(function (v) { line(G, 0, v, 1711, v, 'grid-dot'); });
  [1055, 1097, 1139, 1182, 1224].forEach(function (v) {
    line(G, 1711, v, 1722, v, 'rule');
    line(G, 1711, v + 21, 1716, v + 21, 'rule');
  });
  line(G, 1711, 68, 1711, 1306, 'rule');
  [622, 1030, 1282].forEach(function (v) { line(G, 0, v, 1787, v, 'rule'); });
  [308, 550, 894, 1231, 1519].forEach(function (v) { line(G, v, 1282, v, 1306, 'rule'); });
  [368, 426, 490, 634, 716, 970, 1050, 1142, 1302, 1375, 1446, 1658].forEach(function (v) {
    line(G, v, 1282, v, 1288, 'rule-thin');
  });

  /* ---------- candles ---------- */
  var a8 = [
    [12,'c',800,812,1008,1030],[38,'R',683,870,965,1058],[64,'y',685,745,905,915],[93,'c',550,712,757,825],
    [119,'c',745,757,797,845],[145,'w',758,797,797,838],[171,'r',795,818,832,915],[197,'Rc',728,815,878,885],
    [223,'R',890,920,970,985],[249,'Rc',915,960,1045,1058],[275,'R',940,985,1058,1090],[301,'R',780,940,975,990],
    [327,'y',635,672,945,950],[353,'r',543,597,675,705],[383,'r',318,400,585,650],[409,'c',170,434,505,540],
    [435,'c',365,367,720,825],[461,'c',640,655,712,830],[487,'r',675,765,770,870],[513,'Rc',650,785,885,915],
    [539,'y',565,565,892,892],[566,'r',415,525,580,650],[592,'c',407,530,541,640],[618,'c',425,542,568,650],
    [644,'r',430,440,617,708],[670,'r',415,470,482,600],[698,'r',425,467,482,530],[725,'r',240,268,468,470],
    [751,'r',185,205,296,370],[777,'c',125,208,235,307],[803,'c',178,268,285,380],[829,'c',300,348,397,470],
    [855,'r',270,296,402,460],[881,'c',295,335,410,460],[908,'Rc',363,435,550,618],[934,'Rc',445,538,585,658],
    [960,'R',385,408,590,658],[988,'c',370,425,608,720],[1015,'R',565,597,625,790],[1041,'R',555,600,632,685],
    [1067,'r',425,468,603,655],[1093,'c',250,363,370,565],[1119,'c',380,443,495,580],[1145,'Rc',365,505,530,698],
    [1171,'r',455,515,585,600],[1198,'r',440,468,525,585],[1224,'y',350,362,465,480],[1250,'r',282,350,387,450],
    [1279,'r',260,278,375,420],[1305,'r',52,155,283,310],[1331,'c',145,200,325,612],[1357,'r',275,278,388,505],
    [1383,'R',195,240,298,355],[1410,'r',97,145,258,290],[1436,'r',0,143,180,250],[1462,'c',82,203,215,312],
    [1488,'r',195,230,300,315]
  ];
  var a9 = [
    [33,'c',97,195,380,455],[60,'R',255,313,388,400],[88,'Rc',235,352,470,472],[114,'Rc',335,445,490,530],
    [140,'Rc',485,515,768,815],[167,'Rc',675,768,938,975],[193,'R',828,912,928,945],[219,'R',860,860,935,935],
    [245,'Rc',875,925,985,990],[271,'R',940,965,985,1000],[297,'R',867,867,945,975],[323,'c',845,858,915,925],
    [349,'r',888,890,932,950],[375,'c',888,888,955,957],[404,'Rc',940,975,1075,1090],[430,'R',990,995,1078,1103],
    [456,'R',722,865,915,928],[482,'y',870,920,945,960],[509,'c',875,915,1000,1010],[535,'R',1025,1043,1055,1145],
    [561,'y',1000,1003,1073,1100],[587,'R',998,998,1045,1050],[613,'R',962,1003,1048,1060],[639,'R',955,997,1015,1020],
    [665,'r',895,899,985,990],[694,'c',903,903,937,1043],[720,'r',900,930,940,980],[747,'c',902,930,1032,1040],
    [773,'R',1015,1045,1060,1103],[799,'R',970,970,1050,1052],[825,'R',975,990,1037,1045],[851,'c',952,983,1000,1015],
    [878,'c',985,1008,1042,1060],[904,'R',970,972,1060,1065],[930,'c',943,970,1027,1030],[956,'c',1020,1047,1075,1095],
    [985,'Rc',1070,1070,1208,1235],[1011,'R',1178,1178,1320,1320],[1037,'R',1180,1212,1235,1295],[1063,'Rc',1185,1187,1405,1410],
    [1089,'R',1320,1370,1378,1438],[1115,'Rc',1375,1390,1465,1478],[1141,'R',1360,1390,1455,1480],[1167,'R',1303,1335,1350,1388],
    [1193,'y',1240,1243,1350,1373],[1219,'r',1225,1227,1265,1280],[1245,'w',1225,1245,1245,1280],[1271,'c',1243,1245,1355,1358],
    [1300,'R',1275,1305,1360,1378],[1326,'R',1290,1290,1335,1350],[1353,'r',1245,1245,1312,1315],[1379,'c',1230,1258,1275,1310],
    [1405,'r',1253,1264,1305,1330]
  ];
  var C = g('candles');
  var CY = '#55ffff', RD = '#ff1010', HL = '#ff3030', YL = '#ffee00';
  function candle(map, d) {
    var p = map(d[0], d[2]), x = Math.round(p[0]);
    var wt = p[1], bt = map(0, d[3])[1], bb = map(0, d[4])[1], wb = map(0, d[5])[1];
    var t = d[1];
    var wc = { c: CY, r: HL, R: RD, y: YL, Rc: RD, w: '#fff' }[t];
    var ww = { c: 1.5, r: 1.5, R: 4, y: 4, Rc: 4, w: 1.5 }[t];
    el(C, 'rect', { x: x - ww / 2, y: wt, width: ww, height: wb - wt, fill: wc, 'class': 'crisp' });
    if (t === 'r') {
      el(C, 'rect', { x: x - 4.5, y: bt, width: 9, height: Math.max(bb - bt, 2), fill: '#000', stroke: HL, 'stroke-width': 1.5, 'class': 'crisp' });
    } else if (t === 'w') {
      el(C, 'rect', { x: x - 5, y: bt, width: 10, height: 1.5, fill: '#fff', 'class': 'crisp' });
    } else {
      var f = { c: CY, R: RD, y: YL, Rc: CY }[t];
      el(C, 'rect', { x: x - 5, y: bt, width: 10, height: bb - bt, fill: f, 'class': 'crisp' });
    }
  }

  /* ---------- white line under the candles ---------- */
  var whiteA = pts(Z8, [12,945,40,930,90,915,150,895,197,883,222,935,245,945,295,945,320,905,340,855,380,830,415,795,440,790,470,775,490,770,510,840,540,745,580,718,615,703,650,675,705,630,745,582,790,515,810,497,860,452,880,445,905,510,960,505,990,490,1060,490,1120,495,1195,520,1222,470,1280,450,1310,437,1355,433,1400,405,1440,372,1480,332,1510,318,1530,365,1565,375]);
  var whiteB = pts(Z9, [88,375,120,380,140,390,190,440,230,500,290,590,340,670,400,775,440,850,490,910,530,955,580,1010,600,1025,640,1040,665,985,700,982,745,985,775,1060,850,1065,880,1065,905,1020,930,1075,975,1080,1005,1105,1035,1110,1110,1175,1190,1245,1210,1265,1270,1300,1325,1335,1350,1290,1380,1293,1405,1303]);
  poly(g('white'), whiteA.concat(whiteB), '#ffffff', 3.5, 'crisp');

  a8.forEach(function (d) { candle(Z8, d); });
  a9.forEach(function (d) { candle(Z9, d); });

  /* ---------- coloured lines over the candles ---------- */
  var L = g('lines');
  var red = pts(Z8, [12,795,70,792,118,745,330,745,355,710,380,640,437,397,725,397,780,235,805,203,1310,203,1357,155,1440,153,1465,145,1490,142]).concat(
    pts(Z9, [5,140,745,140,775,180,820,270,850,315,880,400,905,490,925,600,955,815,985,865,1245,865,1295,897,1405,897]));
  poly(L, red, '#ff0000', 3.5, 'crisp');
  var green = [[7,581],[83,581],[156,544],[181,500]].concat(
    pts(Z8, [330,1150,355,1113,592,1113,620,1070,645,1041,1045,1041,1065,1015,1115,920,1145,883,1305,883,1355,623]),
    pts(Z9, [0,623,132,623]));
  poly(L, green, '#00ee00', 3.5, 'crisp');
  var green2 = pts(Z9, [150,645,175,730,200,870,218,937,245,937,295,983,395,983,430,1030,455,1073,985,1073,1045,1235,1070,1238,1110,1385,1150,1440,1165,1463,1405,1463]);
  poly(L, green2, '#00ee00', 3.5, 'crisp');
  var yellow = pts(Z8, [12,895,45,895,65,880,93,800,150,797,170,820,197,815,230,880,262,940,290,945,327,900,360,760,395,580,410,550,435,545,470,630,510,725,540,745,570,650,600,600,620,585,650,583,700,520,730,460,775,320,800,305,840,340,880,350,910,400,945,475,985,495,1010,560,1045,585,1070,575,1095,500,1120,480,1145,505,1195,518,1222,470,1280,405,1305,325,1330,325,1357,355,1385,300,1420,240,1460,213,1510,240,1565,310]).concat(
    pts(Z9, [90,320,120,385,145,480,170,620,195,720,240,820,275,900,300,905,375,908,400,945,430,990,455,935,510,930,535,990,560,1005,640,1010,665,985,745,958,770,1000,800,1010,850,997,900,1012,930,1002,985,1070,1040,1185,1075,1240,1100,1300,1135,1365,1150,1370,1190,1350,1240,1287,1275,1285,1300,1305,1340,1305,1355,1290,1405,1292]));
  poly(L, yellow, '#e8e800', 1.2);
  /* scattered dots following the yellow series */
  for (i = 3; i < 108; i += 2) {
    var dx = 7 + i * 15.1;
    var dy = at(yellow, dx) + (i % 4 === 1 ? 9 : -9);
    el(L, 'rect', { x: Math.round(dx) - 4, y: Math.round(dy), width: 2, height: 2, fill: '#d8d800' });
  }
  /* extreme price markers */
  el(L, 'path', { d: 'M840 106L826 100M826 100v6M826 100h6', stroke: '#b0b0b0', 'stroke-width': 1.2, fill: 'none' });
  el(L, 'path', { d: 'M1522 596H1505M1505 596l5-4M1505 596l5 4', stroke: '#b0b0b0', 'stroke-width': 1.2, fill: 'none' });

  /* walking figures */
  var FG = g('figures');
  [[234, 148], [447, 135], [764, 158]].forEach(function (q) {
    var gp = el(FG, 'g', { transform: 'translate(' + q[0] + ' ' + q[1] + ')' });
    el(gp, 'circle', { cx: 0, cy: -8, r: 2.5, fill: '#e09040' });
    el(gp, 'path', { d: 'M0 -5L-1 2L-7 10M-1 2L7 10M-6 0L1 -4L6 0', stroke: '#f4a850', 'stroke-width': 2.2, fill: 'none' });
  });

  /* ---------- second pane: band between two series ---------- */
  var F = [].concat(
    pts(Z10, [10,468,35,465,50,440,95,368,110,385,145,397,175,450,200,520,235,720,250,800,275,865,300,855,320,760,340,620,355,500,380,320,410,245,435,310,480,510,510,640,512,657,540,655,565,605,590,565,625,515,645,480,700,435,725,370,750,290,777,248,800,258,825,320,850,370,880,450,905,570,930,700,960,725,1015,840,1040,847,1065,795,1090,695,1120,635,1195,610,1230,500,1262,395,1310,260,1400,330,1470,340]),
    pts(Z11, [5,395,30,470,60,600,100,770,135,950,160,1065,185,1108,205,1100,235,1080,260,1035,290,975,325,910,355,893,370,908,400,905,410,890,435,815,460,765,485,765,510,830,555,875,580,855,605,815,630,720,655,680,685,605,705,630,735,710,760,768,780,765,805,730,830,750,855,710,880,720,905,820,930,950,955,1048,985,1060,1005,1090,1025,1075,1055,1065,1085,1010,1110,940,1150,780,1180,680,1205,675,1255,675,1280,610,1330,525]));
  var S = [].concat(
    pts(Z10, [10,530,35,518,60,480,90,445,115,435,150,430,195,465,220,530,275,650,300,677,335,635,345,610,380,540,410,490,440,493,480,512,510,542,540,543,590,517,625,517,690,500,720,465,750,415,790,367,850,368,885,405,930,500,965,550,1000,615,1045,700,1080,708,1095,700,1195,680,1205,655,1260,530,1305,437,1350,420,1395,395,1440,340,1470,340]),
    pts(Z11, [20,395,55,450,85,520,115,620,155,780,195,880,250,965,285,985,300,985,350,968,400,955,420,925,450,865,480,845,510,857,540,855,580,845,610,815,650,765,680,722,705,720,750,740,760,745,800,722,830,728,880,720,920,800,955,885,985,915,1030,970,1060,995,1085,997,1130,955,1180,855,1220,815,1260,750,1285,690,1330,625]));
  var dO = '', dB = '';
  for (var x = 6; x <= 1656; x++) {
    var yf = Math.round(at(F, x)), ys = Math.round(at(S, x));
    if (x > 700 && x < 860) { yf = Math.max(yf, 752); ys = Math.max(ys, 752); }
    if (yf === ys) continue;
    var seg = 'M' + x + '.5 ' + yf + 'V' + ys;
    if (yf < ys) dO += seg; else dB += seg;
  }
  var P2 = document.createDocumentFragment();
  el(P2, 'path', { d: dO, stroke: '#ff9900', 'stroke-width': 1, fill: 'none', 'class': 'crisp' });
  el(P2, 'path', { d: dB, stroke: '#0033ff', 'stroke-width': 1, fill: 'none', 'class': 'crisp' });
  var RG = '#ff0000', GR = '#00ee00';
  [
    [Z10, GR, [10,468,35,465]],
    [Z10, RG, [35,465,50,440,95,368]],
    [Z10, GR, [95,368,110,385,145,397,175,450,200,520,235,720,250,800,275,865,285,860]],
    [Z10, RG, [285,860,300,855,320,760,340,620,355,500,380,320,410,245]],
    [Z10, GR, [410,245,435,310,480,510,510,640,512,657,540,655,565,605]],
    [Z10, RG, [565,605,590,565,625,515,645,480,700,435,725,370,750,290,777,248]],
    [Z10, GR, [777,248,800,258,825,320,850,370,880,450,905,570,930,700,960,725,1015,840,1040,847,1065,795]],
    [Z10, RG, [1065,795,1090,695,1120,635,1195,610,1230,500,1262,395]],
    [Z11, GR, [5,395,30,470,60,600,100,770,135,950,160,1065,185,1108,205,1100]],
    [Z11, RG, [205,1100,235,1080,260,1035,290,975,325,910,355,893]],
    [Z11, GR, [355,893,370,908,400,905,410,890]],
    [Z11, RG, [410,890,435,815,460,765,485,765]],
    [Z11, GR, [485,765,510,830,555,875,580,855]],
    [Z11, RG, [580,855,605,815,630,720,655,680,685,605]],
    [Z11, GR, [685,605,705,630,735,710,760,768,780,765]],
    [Z11, RG, [780,765,805,730]],
    [Z11, GR, [805,730,830,750,855,710,880,720,905,820,930,950,955,1048,985,1060,1005,1090,1025,1075]],
    [Z11, RG, [1025,1075,1055,1065,1085,1010,1110,940,1150,780,1180,680,1205,675]],
    [Z11, GR, [1205,675,1255,675]],
    [Z11, RG, [1255,675,1280,610,1330,525]]
  ].forEach(function (r) { poly(P2, pts(r[0], r[2]), r[1], 4, 'crisp'); });
  [[250, 680, 872, '#00e000'], [446, 653, 872, '#00e000'], [158, 772, 910, '#d84810'], [551, 772, 860, '#d84810'], [1006, 772, 967, '#d84810'], [1445, 772, 973, '#d84810']].forEach(function (v) {
    el(P2, 'line', { x1: v[0], y1: v[1], x2: v[0], y2: v[2], stroke: v[3], 'stroke-width': 1, 'class': 'crisp' });
  });

  /* ---------- third pane ---------- */
  el(P2, 'line', { x1: 5, y1: 1182, x2: 1655, y2: 1182, stroke: '#a0a0a0', 'stroke-width': 2, 'class': 'crisp' });
  poly(P2, pts(Z12, [5,410,20,380,32,355,46,375,60,490,72,580,85,450,95,455,110,495,125,580,140,500,150,420,165,240,190,90,205,380,232,740,245,540,257,545,270,395,285,355,297,320,310,500,322,495,345,230,373,195,390,365,415,710,430,540,453,495,468,605,480,478,495,512,508,515,522,538,535,378,547,450,573,745,612,245,640,205,652,130,665,355,680,340,692,395,705,150,718,122,732,300,745,355,757,612,770,455,785,590,797,540,810,715,822,725,838,580,850,510,862,482,876,510,890,435,903,418,915,425,930,485,950,490,965,400,982,330,997,400,1008,470,1022,497,1035,475,1048,425,1060,428,1075,380,1090,422,1100,425,1115,482,1130,472,1140,490,1155,452,1170,458,1185,470,1195,468,1220,468,1235,518,1250,495,1262,468,1275,463,1298,505,1312,470,1338,412,1362,430,1375,445,1390,445,1402,465,1415,440,1432,465,1442,445]), '#dd1010', 1.2);
  poly(P2, pts(Z12, [5,348,20,325,32,292,46,292,72,455,85,405,110,405,125,455,150,365,165,240,190,90,215,320,232,455,245,408,257,408,270,300,285,263,297,263,310,370,322,365,345,230,373,195,390,265,415,455,430,390,453,390,468,455,480,382,508,382,522,402,535,323,547,323,560,380,573,455,612,260,640,205,652,130,665,222,680,205,692,268,705,150,718,122,732,215,745,270,757,398,770,323,785,385,797,385,810,455]), '#d8d800', 1.2);
  poly(P2, pts(Z12, [825,455,838,396,865,396,876,420,890,385,903,385,915,400,930,433,950,430,965,370,982,327,997,350,1008,420,1020,437,1035,437,1048,412,1060,408,1075,378,1088,400,1100,405,1115,437,1130,437,1140,455,1155,437,1185,437,1190,432,1220,432,1232,455]), '#d8d800', 1.2);
  poly(P2, pts(Z12, [1248,455,1258,440,1285,440,1298,455,1312,435,1325,425,1338,412,1362,430,1375,445,1405,445,1415,435,1430,445,1442,435]), '#d8d800', 1.2);

  g('lines').appendChild(P2);
})();
```
